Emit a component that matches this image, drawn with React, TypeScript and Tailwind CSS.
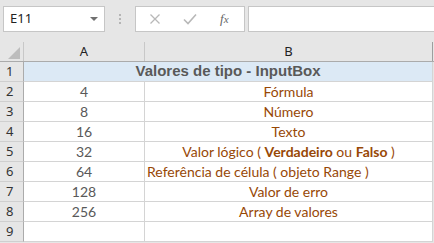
import { ReactNode } from "react";

const rows: { a: string; b: ReactNode; left?: boolean }[] = [
  { a: "4", b: "Fórmula" },
  { a: "8", b: "Número" },
  { a: "16", b: "Texto" },
  {
    a: "32",
    b: (
      <span>
        Valor lógico ( <b>Verdadeiro</b> ou <b>Falso</b> )
      </span>
    ),
  },
  { a: "64", b: "Referência de célula ( objeto Range )", left: true },
  { a: "128", b: "Valor de erro" },
  { a: "256", b: "Array de valores" },
  { a: "", b: "" },
];

const uiFont = { fontFamily: '"Noto Sans", "Open Sans", sans-serif' };
const cellFont = { fontFamily: 'Lato, "Liberation Sans", sans-serif' };

function RowHead({ n }: { n: number }) {
  return (
    <div
      className="w-[24px] shrink-0 h-full flex items-center pl-[6px] text-[13px] text-[#333] bg-[#e6e6e6] border-r border-b border-r-[#ababab] border-b-[#cfcfcf]"
      style={uiFont}
    >
      {n}
    </div>
  );
}

export default function App() {
  return (
    <div className="w-[434px] h-[243px] bg-[#e6e6e6] overflow-hidden select-none">
      {/* Name box + formula bar */}
      <div className="h-[41px] flex items-start pt-[6px]">
        <div className="ml-[3px] w-[102px] h-[26px] bg-white border border-[#c6c6c6] flex items-center pl-[6px] pr-[6px]">
          <span className="text-[13px] text-[#222]" style={uiFont}>
            E11
          </span>
          <span className="ml-auto w-0 h-0 border-l-[4px] border-r-[4px] border-t-[4px] border-l-transparent border-r-transparent border-t-[#707070]" />
        </div>
        <div className="w-[30px] h-[26px] flex flex-col items-center justify-center gap-[2px]">
          <span className="w-[2px] h-[2px] bg-[#b5b5b5]" />
          <span className="w-[2px] h-[2px] bg-[#b5b5b5]" />
          <span className="w-[2px] h-[2px] bg-[#b5b5b5]" />
        </div>
        <div className="w-[110px] h-[26px] bg-white border border-[#c6c6c6] flex items-center">
          <svg width="12" height="12" viewBox="0 0 12 12" className="ml-[13px]">
            <path d="M1.5 1.5 L10.5 10.5 M10.5 1.5 L1.5 10.5" stroke="#b8b8b8" strokeWidth="1.3" fill="none" />
          </svg>
          <svg width="14" height="12" viewBox="0 0 14 12" className="ml-[22px]">
            <path d="M1 6.5 L5 10.5 L13 1.5" stroke="#b8b8b8" strokeWidth="1.6" fill="none" />
          </svg>
          <span
            className="ml-[23px] italic text-[13px] text-[#666]"
            style={{ fontFamily: '"Liberation Serif", serif' }}
          >
            f<span className="text-[11px]">x</span>
          </span>
        </div>
        <div className="ml-[3px] flex-1 h-[26px] bg-white border border-[#c6c6c6] border-r-0" />
      </div>

      {/* Column headers */}
      <div className="h-[21px] flex border-b border-[#ababab] text-[13px] text-[#222]" style={uiFont}>
        <div className="w-[24px] shrink-0 relative border-r border-[#c8c8c8] mt-[1px]">
          <span
            className="absolute right-[3px] bottom-[2px] w-0 h-0"
            style={{ borderBottom: "12px solid #bdbdbd", borderLeft: "12px solid transparent" }}
          />
        </div>
        <div className="w-[121px] shrink-0 flex items-center justify-center border-r border-[#c8c8c8] mt-[1px]">A</div>
        <div className="w-[288px] shrink-0 flex items-center justify-center border-r border-[#9e9e9e] mt-[1px]">B</div>
      </div>

      <div className="text-[14px]" style={cellFont}>
        {/* Row 1 merged title */}
        <div className="h-[20px] flex">
          <RowHead n={1} />
          <div
            className="w-[409px] shrink-0 bg-[#dce9f5] border-b border-r border-[#d4d4d4] flex items-center justify-center font-bold text-[15px] text-[#595959]"
            style={{ fontFamily: '"Liberation Sans", Arial, sans-serif' }}
          >
            Valores de tipo - InputBox
          </div>
        </div>

        {rows.map((r, i) => (
          <div key={i} className="h-[20px] flex">
            <RowHead n={i + 2} />
            <div className="w-[121px] shrink-0 bg-white border-b border-r border-[#d4d4d4] flex items-center justify-center text-[#595959]">
              {r.a}
            </div>
            <div
              className={`w-[288px] shrink-0 bg-white border-b border-r border-[#d4d4d4] flex items-center text-[#974806] whitespace-nowrap ${
                r.left ? "justify-start pl-[2px]" : "justify-center"
              }`}
            >
              {r.b}
            </div>
          </div>
        ))}
      </div>
    </div>
  );
}
